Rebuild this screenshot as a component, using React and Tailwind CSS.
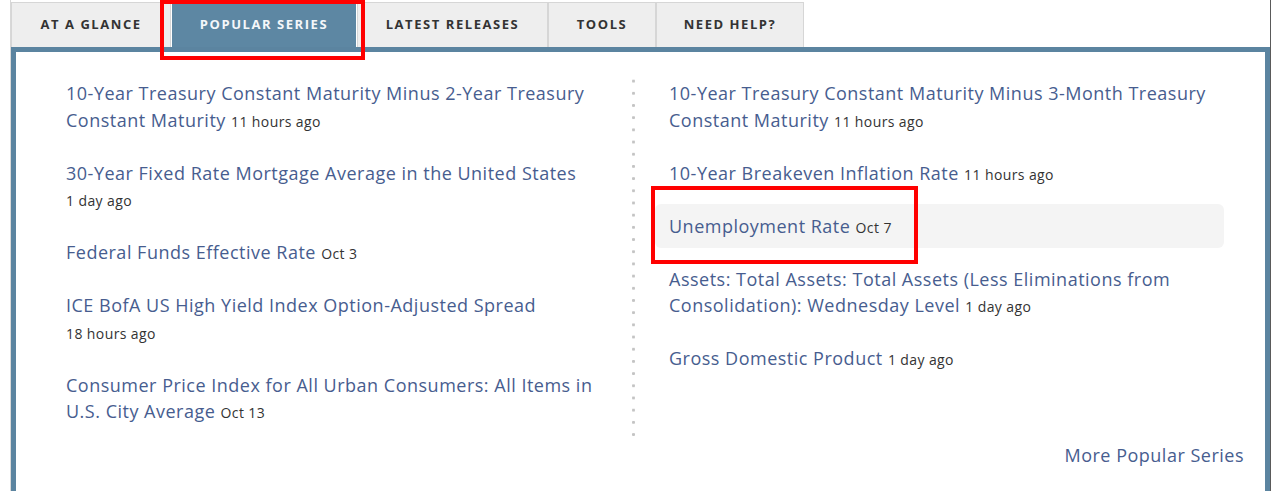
import React from 'react';

const tabs = [
  { label: 'AT A GLANCE', w: 'w-[160px]' },
  { label: 'POPULAR SERIES', w: 'w-[184px]', active: true },
  { label: 'LATEST RELEASES', w: 'w-[191px]' },
  { label: 'TOOLS', w: 'w-[108px]' },
  { label: 'NEED HELP?', w: 'w-[148px]' },
];

const leftSeries = [
  { title: '10-Year Treasury Constant Maturity Minus 2-Year Treasury Constant Maturity', when: '11 hours ago' },
  { title: '30-Year Fixed Rate Mortgage Average in the United States', when: '1 day ago' },
  { title: 'Federal Funds Effective Rate', when: 'Oct 3' },
  { title: 'ICE BofA US High Yield Index Option-Adjusted Spread', when: '18 hours ago' },
  { title: 'Consumer Price Index for All Urban Consumers: All Items in U.S. City Average', when: 'Oct 13' },
];

const rightSeries = [
  { title: '10-Year Treasury Constant Maturity Minus 3-Month Treasury Constant Maturity', when: '11 hours ago' },
  { title: '10-Year Breakeven Inflation Rate', when: '11 hours ago' },
  { title: 'Unemployment Rate', when: 'Oct 7', hover: true },
  { title: 'Assets: Total Assets: Total Assets (Less Eliminations from Consolidation): Wednesday Level', when: '1 day ago' },
  { title: 'Gross Domestic Product', when: '1 day ago' },
];

const SeriesItem = ({ item }) => (
  <li
    className={`mb-[8.5px] rounded-md py-[9px] pl-[14px] pr-[6px] text-[18px] leading-[26.5px] tracking-[0.5px] ${
      item.hover ? 'bg-[#f4f4f4]' : ''
    }`}
  >
    <a href="#" className="text-[#475d8f]">{item.title}</a>{' '}
    <span className="whitespace-nowrap text-[14px] leading-none tracking-[0.4px] text-[#333333]">{item.when}</span>
  </li>
);

const App = () => {
  return (
    <div className="relative h-[491px] w-[1280px] overflow-hidden bg-white font-['Open_Sans',sans-serif]">
      <div className="ml-[10px] flex h-full w-[1261px] flex-col border-l border-r border-l-[#d8d8d8] border-r-[#5a5a5a]">
        {/* tabs */}
        <div className="flex h-[47px] items-end">
          {tabs.map((tab) => (
            <div
              key={tab.label}
              className={`flex items-center justify-center text-[13px] font-bold tracking-[0.12em] ${tab.w} ${
                tab.active
                  ? 'mx-[1px] h-[44px] bg-[#5d87a3] text-[#f4f7fa]'
                  : 'h-[45px] border border-b-0 border-[#d6d6d6] bg-[#eeeeee] text-[#333333]'
              }`}
            >
              {tab.label}
            </div>
          ))}
        </div>

        {/* panel */}
        <div className="flex-1 border-[5px] border-b-0 border-[#5b84a0] bg-white">
          <div className="flex pl-[36px] pt-[19px]">
            <ul className="w-[560px]">
              {leftSeries.map((s) => (
                <SeriesItem key={s.title} item={s} />
              ))}
            </ul>
            <div className="mx-[20px] mb-[2px] mt-[4px] w-[3px] bg-[radial-gradient(circle,#c4c4c4_1.3px,transparent_1.6px)] bg-[length:3px_12.2px]" />
            <ul className="w-[569px]">
              {rightSeries.map((s) => (
                <SeriesItem key={s.title} item={s} />
              ))}
            </ul>
          </div>
          <div className="pr-[21px] text-right text-[18px] leading-[26px] tracking-[0.5px]">
            <a href="#" className="text-[#475d8f]">More Popular Series</a>
          </div>
        </div>
      </div>

      {/* annotation boxes */}
      <div className="pointer-events-none absolute left-[160px] top-0 h-[60px] w-[205px] border-4 border-[#ff0000]" />
      <div className="pointer-events-none absolute left-[651px] top-[186px] h-[78px] w-[267px] border-4 border-[#ff0000]" />
    </div>
  );
};

export default App;
